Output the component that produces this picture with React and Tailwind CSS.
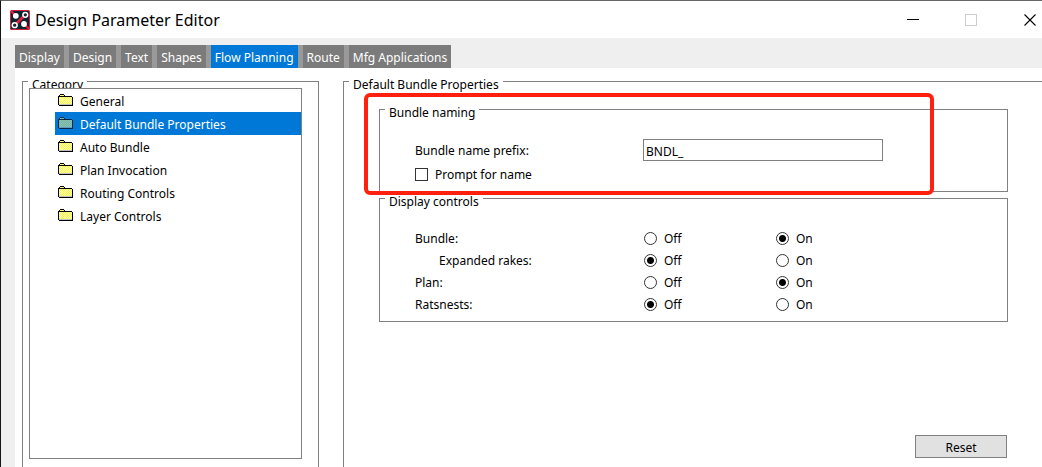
import { useState } from 'react';

const TABS = ['Display', 'Design', 'Text', 'Shapes', 'Flow Planning', 'Route', 'Mfg Applications'];

const CATEGORIES = [
  'General',
  'Default Bundle Properties',
  'Auto Bundle',
  'Plan Invocation',
  'Routing Controls',
  'Layer Controls',
];

const DISPLAY_CONTROLS = [
  { key: 'bundle', label: 'Bundle:', value: 'On' },
  { key: 'rakes', label: 'Expanded rakes:', value: 'Off', nested: true },
  { key: 'plan', label: 'Plan:', value: 'On' },
  { key: 'ratsnests', label: 'Ratsnests:', value: 'Off' },
];

function AppIcon() {
  return (
    <svg width="20" height="20" viewBox="0 0 20 20" aria-hidden="true">
      <rect width="20" height="20" rx="1.5" fill="#d3203a" />
      <rect x="1" y="1" width="18" height="18" rx="1" fill="#0c2531" />
      <path d="M1 1l4 4M19 19l-4-4" stroke="#e2213c" strokeWidth="2" />
      <path d="M6 14L14 6" stroke="#e2213c" strokeWidth="2.6" />
      <circle cx="5.8" cy="5.8" r="2.9" fill="#fff" />
      <circle cx="14" cy="14" r="2.9" fill="#fff" />
      <circle cx="15.3" cy="4.8" r="2.4" fill="#0c2531" stroke="#fff" strokeWidth="1.5" />
      <circle cx="4.7" cy="15.2" r="2.4" fill="#0c2531" stroke="#fff" strokeWidth="1.5" />
    </svg>
  );
}

function FolderIcon({ selected }) {
  const id = selected ? 'dither-selected' : 'dither';
  return (
    <svg width="15" height="12" viewBox="0 0 15 12" shapeRendering="crispEdges" className="shrink-0" aria-hidden="true">
      <defs>
        <pattern id={id} width="2" height="2" patternUnits="userSpaceOnUse">
          <rect width="2" height="2" fill={selected ? '#7fbbeb' : '#ffffff'} />
          <rect width="1" height="1" fill={selected ? '#7fbb6b' : '#ffff00'} />
          <rect x="1" y="1" width="1" height="1" fill={selected ? '#7fbb6b' : '#ffff00'} />
        </pattern>
      </defs>
      <path d="M2 0h4v1h1v1h7v9h-14v-9h1v-1h1z" fill={`url(#${id})`} />
      <path d="M1 10h13v1h-13z" fill={selected ? '#609bc0' : '#c0c0c0'} />
      <path
        d="M2 0h4v1h-4zM1 1h1v1h-1zM6 1h1v1h-1zM0 2h1v9h-1zM1 2h13v1h-13zM14 3h1v9h-1zM1 11h14v1h-14z"
        fill={selected ? '#00284d' : '#000000'}
      />
    </svg>
  );
}

function Group({ title, className = '', children }) {
  return (
    <fieldset className={`min-w-0 border border-[#808080] pl-[5px] ${className}`}>
      <legend className="px-1 pt-2 leading-4">{title}</legend>
      {children}
    </fieldset>
  );
}

function RadioOption({ name, label, checked, onChange }) {
  return (
    <label className="flex w-[132px] items-center gap-[7px]">
      <input
        type="radio"
        name={name}
        checked={checked}
        onChange={onChange}
        className="size-[13px] appearance-none rounded-full border border-[#333] bg-white checked:bg-[radial-gradient(circle,#000_3px,#fff_4px)]"
      />
      <span className="pt-0.5">{label}</span>
    </label>
  );
}

function TitleBar() {
  return (
    <header className="flex h-[37px] items-center bg-white pl-[9px]">
      <AppIcon />
      <h1 className="ml-[5px] flex-1 text-base">Design Parameter Editor</h1>
      <div className="flex h-full">
        <button type="button" aria-label="Minimize" className="flex w-[58px] items-center justify-center">
          <svg width="12" height="12" shapeRendering="crispEdges"><path d="M0 5.5h12" stroke="#000" /></svg>
        </button>
        <button type="button" aria-label="Maximize" disabled className="flex w-[58px] items-center justify-center">
          <svg width="12" height="12" shapeRendering="crispEdges"><path d="M.5.5h11v11h-11z" fill="none" stroke="#ccc" /></svg>
        </button>
        <button type="button" aria-label="Close" className="flex w-[42px] items-center justify-center pl-[18px]">
          <svg width="12" height="12"><path d="M.5.5l11 11M11.5.5l-11 11" stroke="#000" strokeWidth="1.1" /></svg>
        </button>
      </div>
    </header>
  );
}

export default function App() {
  const [tab, setTab] = useState('Flow Planning');
  const [category, setCategory] = useState('Default Bundle Properties');
  const [prefix, setPrefix] = useState('BNDL_');
  const [prompt, setPrompt] = useState(false);
  const [display, setDisplay] = useState(
    Object.fromEntries(DISPLAY_CONTROLS.map((c) => [c.key, c.value])),
  );

  return (
    <div className="flex min-h-screen flex-col border-l border-t border-l-[#141414] border-t-[#666] bg-[#efefef] font-['Noto_Sans','Open_Sans',sans-serif] text-xs leading-4 text-black">
      <TitleBar />

      <nav className="flex pl-[14px] pt-[7px]">
        <div className="flex gap-[5px] bg-[#999]">
          {TABS.map((name) => (
            <button
              key={name}
              type="button"
              onClick={() => setTab(name)}
              className={`h-[23px] px-1 pt-0.5 text-white ${name === tab ? 'bg-[#0078d7]' : 'bg-[#7b7b7b]'}`}
            >
              {name}
            </button>
          ))}
        </div>
      </nav>

      <main className="ml-[14px] flex flex-1 gap-6 overflow-hidden bg-white pl-[7px] pt-px">
        <Group title="Category" className="flex w-[297px] shrink-0 flex-col border-b-0 pb-[7px] pr-4">
          <ul className="relative -mt-[5px] ml-px h-[371px] border border-[#808080] bg-white pl-[25px]">
            {CATEGORIES.map((name) => (
              <li key={name}>
                <button
                  type="button"
                  onClick={() => setCategory(name)}
                  className={`flex h-[23px] w-full items-start gap-[7px] pl-[3px] pt-[5px] text-left leading-4 ${name === category ? 'bg-[#0078d7] text-white' : ''}`}
                >
                  <FolderIcon selected={name === category} />
                  {name}
                </button>
              </li>
            ))}
          </ul>
        </Group>

        <Group title="Default Bundle Properties" className="flex flex-1 flex-col border-b-0 border-r-0">
          <div className="flex flex-1 flex-col pb-[9px] pl-[30px] pr-[34px] pt-1">
            <Group title="Bundle naming" className="relative pb-1.5">
              <div className="flex flex-col gap-0.5 pl-[30px] pt-[18px]">
                <div className="flex h-[22px] items-center">
                  <label htmlFor="prefix" className="w-[228px] pt-0.5">Bundle name prefix:</label>
                  <input
                    id="prefix"
                    type="text"
                    value={prefix}
                    onChange={(e) => setPrefix(e.target.value)}
                    className="h-[22px] w-60 border border-[#808080] bg-white px-0.5 pt-0.5"
                  />
                </div>
                <label className="flex h-[22px] items-center gap-[7px]">
                  <input
                    type="checkbox"
                    checked={prompt}
                    onChange={(e) => setPrompt(e.target.checked)}
                    className="size-[13px] appearance-none border border-[#333] bg-white checked:bg-black"
                  />
                  <span className="pt-0.5">Prompt for name</span>
                </label>
              </div>
              <div className="pointer-events-none absolute -bottom-1 -left-4 -top-7 right-[73px] rounded-md border-4 border-[#ff2010]" />
            </Group>

            <Group title="Display controls" className="-mt-1.5 pb-1.5">
              <div className="pl-[30px] pt-[17px]">
                {DISPLAY_CONTROLS.map((c) => (
                  <div key={c.key} role="radiogroup" aria-label={c.label} className="flex h-[22px] items-center">
                    <span className={`w-[229px] pt-0.5 ${c.nested ? 'pl-6' : ''}`}>{c.label}</span>
                    {['Off', 'On'].map((value) => (
                      <RadioOption
                        key={value}
                        name={c.key}
                        label={value}
                        checked={display[c.key] === value}
                        onChange={() => setDisplay({ ...display, [c.key]: value })}
                      />
                    ))}
                  </div>
                ))}
              </div>
            </Group>

            <button
              type="button"
              className="mr-px mt-auto h-[23px] w-[92px] self-end border border-[#808080] bg-[#e1e1e1] pt-0.5"
            >
              Reset
            </button>
          </div>
        </Group>
      </main>
    </div>
  );
}
